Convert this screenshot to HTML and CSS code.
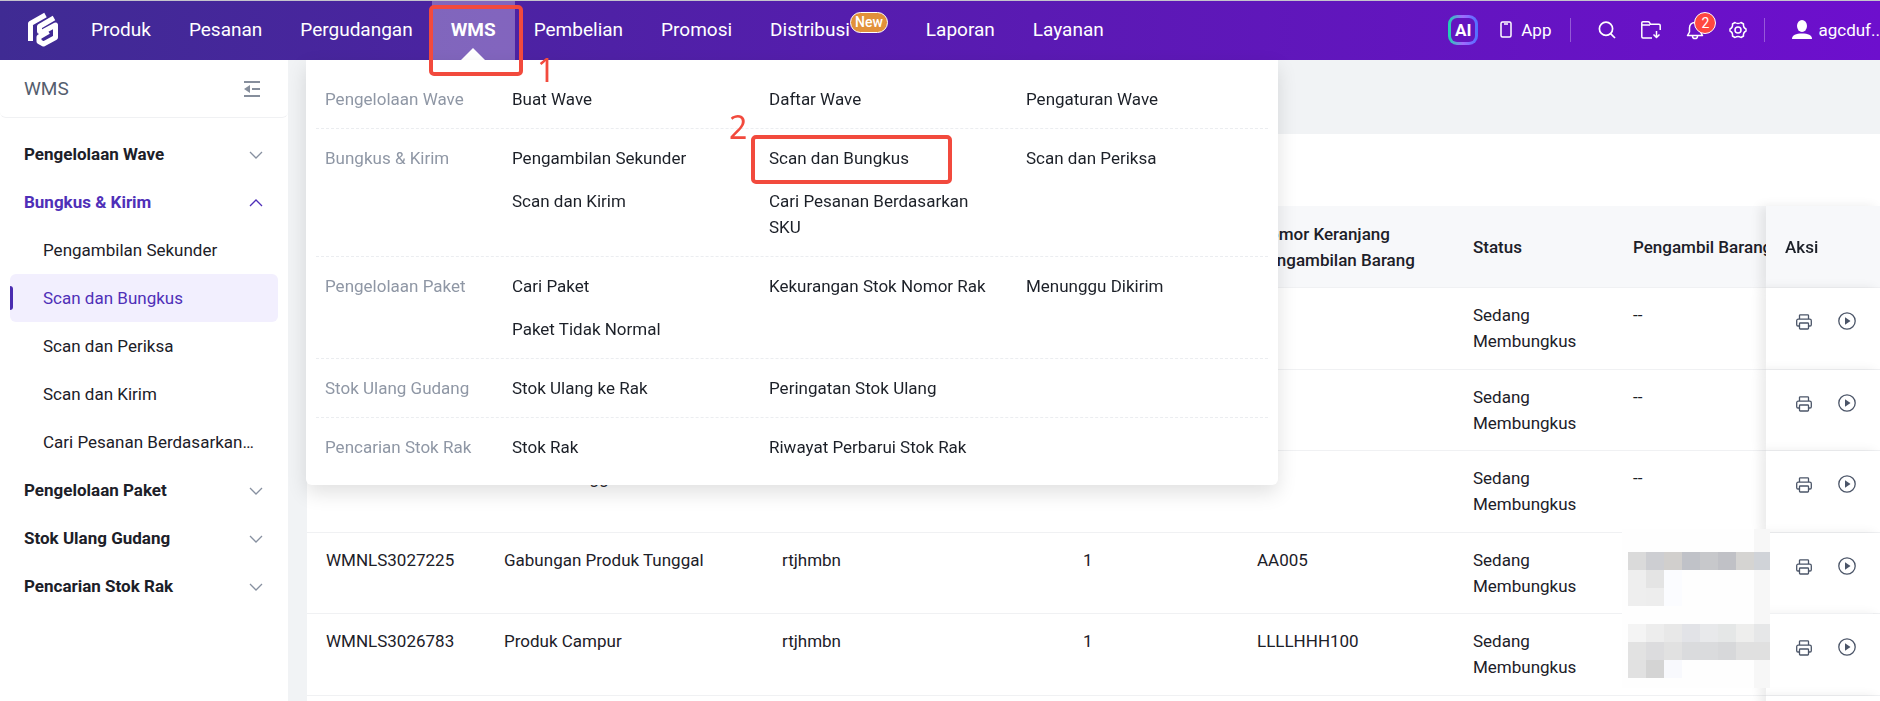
FILE: index.html
```
<!DOCTYPE html>
<html lang="id">
<head>
  <meta charset="utf-8">
  <title>WMS - Scan dan Bungkus</title>
  <link rel="stylesheet" href="styles.css">
</head>
<body>
  <svg class="sprite" aria-hidden="true">
    <symbol id="chevron" viewBox="0 0 14 8">
      <path d="M1 1l6 6 6-6" fill="none" stroke="currentColor" stroke-width="1.3"/>
    </symbol>
    <symbol id="print" viewBox="0 0 16 16">
      <g fill="none" stroke="currentColor" stroke-width="1.3">
        <path d="M3.5 5V1.600a.8.8 0 0 1 .8-.8h7.400a.8.8 0 0 1 .8.8V5"/>
        <path d="M3.500 12H2a1.300 1.300 0 0 1-1.300-1.300V6.800C.7 5.900 1.300 5.200 2.200 5.200h11.600c.9 0 1.500.7 1.500 1.600v3.900A1.300 1.300 0 0 1 14 12h-1.500"/>
        <rect x="3.500" y="9" width="9" height="6" rx=".8"/>
      </g>
    </symbol>
    <symbol id="play" viewBox="0 0 18 18">
      <circle cx="9" cy="9" r="8.200" fill="none" stroke="currentColor" stroke-width="1.300"/>
      <path d="M7 5.300l5.500 3.700-5.500 3.700z" fill="currentColor"/>
    </symbol>
  </svg>

  <header class="topbar">
    <a class="logo" href="#" aria-label="Beranda">
      <svg width="32" height="35" viewBox="0 0 32 35" fill="none" stroke="#fff" stroke-width="5" stroke-linejoin="round">
        <path d="M3.500 29V11.500L18.500 3"/>
        <path d="M27 6L12.500 14.500v5l3 .5L28.500 13v12.500L16.500 32l-4.500-2.500V25l9.500-5.500"/>
      </svg>
    </a>
    <nav class="nav">
      <a href="#">Produk</a>
      <a href="#">Pesanan</a>
      <a href="#">Pergudangan</a>
      <a class="active" href="#">WMS</a>
      <a href="#">Pembelian</a>
      <a href="#">Promosi</a>
      <a class="has-tag" href="#">Distribusi<span class="tag-new">New</span></a>
      <a href="#">Laporan</a>
      <a href="#">Layanan</a>
    </nav>
    <div class="tools">
      <button class="ai" type="button">AI</button>
      <a class="app" href="#">
        <svg width="12" height="17" viewBox="0 0 12 17" fill="none" stroke="#fff" stroke-width="1.500">
          <rect x="1" y="1" width="10" height="15" rx="1.500"/><path d="M4 3h4"/>
        </svg>
        App
      </a>
      <span class="line"></span>
      <div class="icons">
        <button type="button" aria-label="Cari">
          <svg width="18" height="18" viewBox="0 0 18 18" fill="none" stroke="#fff" stroke-width="1.700">
            <circle cx="8" cy="7.800" r="6.600"/><path d="M12.600 12.600l4.400 4.400"/>
          </svg>
        </button>
        <button type="button" aria-label="Unduhan">
          <svg width="20" height="18" viewBox="0 0 20 18" fill="none" stroke="#fff" stroke-width="1.500" stroke-linejoin="round">
            <path d="M11 17H2a1.200 1.200 0 0 1-1.200-1.200V1.800c0-.6.400-1 1-1h5.400c.6 0 1 .2 1.300.7l1 1.800h8.500c.7 0 1.200.5 1.200 1.200V9"/>
            <path d="M1 4h8M15.500 10v6.500M12.500 13.500l3 3 3-3"/>
          </svg>
        </button>
        <button class="bell" type="button" aria-label="Notifikasi">
          <svg width="18" height="20" viewBox="0 0 18 20" fill="none" stroke="#fff" stroke-width="1.500" stroke-linejoin="round">
            <path d="M9 2.500c-3.500 0-5.500 2.500-5.500 5.500v4L1.500 15.500h15l-2-3.500V8c0-3-2-5.500-5.500-5.500z"/>
            <path d="M6.500 16c0 1.600 1 2.600 2.500 2.600s2.500-1 2.500-2.600"/>
          </svg>
          <span class="count">2</span>
        </button>
        <button type="button" aria-label="Pengaturan">
          <svg width="18" height="18" viewBox="0 0 18 18" fill="none" stroke="#fff" stroke-width="1.500" stroke-linejoin="round">
            <path d="M6 1.500Q9 3.500 12 1.500L14.500 3Q14 6.500 17 8v2Q14 11.500 14.500 15L12 16.500Q9 14.500 6 16.500L3.500 15Q4 11.500 1 10V8Q4 6.500 3.500 3z"/>
            <circle cx="9" cy="9" r="3"/>
          </svg>
        </button>
      </div>
      <span class="line"></span>
      <a class="user" href="#">
        <svg width="20" height="20" viewBox="0 0 20 20" fill="#fff">
          <ellipse cx="10" cy="6" rx="5" ry="6"/><path d="M0 19c0-4 4-5.500 10-5.500S20 15 20 19z"/>
        </svg>
        <span>agcduf..</span>
      </a>
    </div>
  </header>

  <div class="mega">
    <div class="mega-row">
      <span class="mega-label">Pengelolaan Wave</span>
      <a href="#">Buat Wave</a>
      <a href="#">Daftar Wave</a>
      <a href="#">Pengaturan Wave</a>
    </div>
    <div class="mega-row">
      <span class="mega-label">Bungkus &amp; Kirim</span>
      <a href="#">Pengambilan Sekunder</a>
      <a href="#">Scan dan Bungkus</a>
      <a href="#">Scan dan Periksa</a>
      <a class="first" href="#">Scan dan Kirim</a>
      <a href="#">Cari Pesanan Berdasarkan SKU</a>
    </div>
    <div class="mega-row">
      <span class="mega-label">Pengelolaan Paket</span>
      <a href="#">Cari Paket</a>
      <a href="#">Kekurangan Stok Nomor Rak</a>
      <a href="#">Menunggu Dikirim</a>
      <a class="first" href="#">Paket Tidak Normal</a>
    </div>
    <div class="mega-row">
      <span class="mega-label">Stok Ulang Gudang</span>
      <a href="#">Stok Ulang ke Rak</a>
      <a href="#">Peringatan Stok Ulang</a>
    </div>
    <div class="mega-row">
      <span class="mega-label">Pencarian Stok Rak</span>
      <a href="#">Stok Rak</a>
      <a href="#">Riwayat Perbarui Stok Rak</a>
    </div>
  </div>

  <!-- langkah panduan -->
  <div class="mark mark-wms"></div>
  <span class="step step-one">1</span>
  <div class="mark mark-scan"></div>
  <span class="step step-two">2</span>

  <div class="layout">
    <aside class="sidebar">
      <div class="sidebar-head">
        <span>WMS</span>
        <button type="button" aria-label="Ciutkan menu">
          <svg width="18" height="16" viewBox="0 0 18 16" fill="none" stroke="#868e9c" stroke-width="2">
            <path d="M1 1h16M9 8h8M1 15h16"/><path d="M7 4v8L1 8z" fill="#868e9c" stroke="none"/>
          </svg>
        </button>
      </div>
      <nav class="side-nav">
        <button class="group" type="button">Pengelolaan Wave<svg><use href="#chevron"/></svg></button>
        <button class="group open" type="button">Bungkus &amp; Kirim<svg><use href="#chevron"/></svg></button>
        <a href="#">Pengambilan Sekunder</a>
        <a class="active" href="#">Scan dan Bungkus</a>
        <a href="#">Scan dan Periksa</a>
        <a href="#">Scan dan Kirim</a>
        <a href="#">Cari Pesanan Berdasarkan SKU</a>
        <button class="group" type="button">Pengelolaan Paket<svg><use href="#chevron"/></svg></button>
        <button class="group" type="button">Stok Ulang Gudang<svg><use href="#chevron"/></svg></button>
        <button class="group" type="button">Pencarian Stok Rak<svg><use href="#chevron"/></svg></button>
      </nav>
    </aside>

    <main class="content">
      <div class="card">
        <table class="waves">
          <colgroup>
            <col class="c-wave"><col class="c-type"><col class="c-area"><col class="c-qty"><col class="c-basket"><col class="c-status"><col class="c-picker"><col class="c-action">
          </colgroup>
          <thead>
            <tr>
              <th></th>
              <th></th>
              <th></th>
              <th></th>
              <th>Nomor Keranjang Pengambilan Barang</th>
              <th>Status</th>
              <th>Pengambil Barang</th>
              <th class="action">Aksi</th>
            </tr>
          </thead>
          <tbody>
            <tr>
              <td></td><td></td><td></td><td></td><td></td>
              <td>Sedang Membungkus</td>
              <td>--</td>
              <td class="action"><button type="button" aria-label="Cetak"><svg class="i-print"><use href="#print"/></svg></button><button type="button" aria-label="Mulai"><svg class="i-play"><use href="#play"/></svg></button></td>
            </tr>
            <tr>
              <td></td><td></td><td></td><td></td><td></td>
              <td>Sedang Membungkus</td>
              <td>--</td>
              <td class="action"><button type="button" aria-label="Cetak"><svg class="i-print"><use href="#print"/></svg></button><button type="button" aria-label="Mulai"><svg class="i-play"><use href="#play"/></svg></button></td>
            </tr>
            <tr>
              <td></td><td>Produk Tunggal</td><td></td><td></td><td></td>
              <td>Sedang Membungkus</td>
              <td>--</td>
              <td class="action"><button type="button" aria-label="Cetak"><svg class="i-print"><use href="#print"/></svg></button><button type="button" aria-label="Mulai"><svg class="i-play"><use href="#play"/></svg></button></td>
            </tr>
            <tr>
              <td>WMNLS3027225</td><td>Gabungan Produk Tunggal</td><td>rtjhmbn</td><td>1</td><td>AA005</td>
              <td>Sedang Membungkus</td>
              <td class="masked">
                <svg class="mosaic" viewBox="0 0 148 159" shape-rendering="crispEdges">
                  <path fill="#fefefe" d="M0 0h148v159H0z"/>
                  <path fill="#f7f7f7" d="M132 0h16v159h-16z"/>
                  <g transform="translate(6 23)">
                    <path fill="#dadada" d="M0 0h18v18H0z"/><path fill="#cdced2" d="M18 0h18v18H18z"/><path fill="#d1cfcd" d="M36 0h18v18H36z"/><path fill="#c0c2c8" d="M54 0h18v18H54z"/><path fill="#c7c8cb" d="M72 0h18v18H72z"/><path fill="#c0c1c6" d="M90 0h18v18H90z"/><path fill="#d5d4d2" d="M108 0h18v18h-18z"/><path fill="#d0d3d8" d="M126 0h16v18h-16z"/>
                    <path fill="#eee" d="M0 18h18v36H0z"/><path fill="#e4e4e4" d="M18 18h18v18H18z"/><path fill="#ededed" d="M18 36h18v18H18z"/><path fill="#fbfcff" d="M36 18h18v36H36z"/>
                  </g>
                  <g transform="translate(6 95)">
                    <path fill="#f4f4f4" d="M0 0h18v18H0z"/><path fill="#ededed" d="M18 0h18v18H18z"/><path fill="#e8e8e8" d="M36 0h18v18H36z"/><path fill="#e2e3e7" d="M54 0h18v18H54z"/><path fill="#e8e9eb" d="M72 0h18v18H72z"/><path fill="#e5e7e7" d="M90 0h18v18H90z"/><path fill="#eeeeed" d="M108 0h18v18h-18z"/><path fill="#e6e7e8" d="M126 0h16v18h-16z"/>
                    <path fill="#e2e2e2" d="M0 18h18v18H0z"/><path fill="#dcdcde" d="M18 18h18v18H18z"/><path fill="#e1e1e1" d="M36 18h18v18H36z"/><path fill="#dadbdd" d="M54 18h36v18H54z"/><path fill="#d7d8da" d="M90 18h18v18H90z"/><path fill="#e0e0e0" d="M108 18h34v18h-34z"/>
                    <path fill="#e1e1e1" d="M0 36h18v18H0z"/><path fill="#d4d4d4" d="M18 36h18v18H18z"/><path fill="#f8f9fd" d="M36 36h18v18H36z"/>
                  </g>
                </svg>
              </td>
              <td class="action"><button type="button" aria-label="Cetak"><svg class="i-print"><use href="#print"/></svg></button><button type="button" aria-label="Mulai"><svg class="i-play"><use href="#play"/></svg></button></td>
            </tr>
            <tr>
              <td>WMNLS3026783</td><td>Produk Campur</td><td>rtjhmbn</td><td>1</td><td>LLLLHHH100</td>
              <td>Sedang Membungkus</td>
              <td></td>
              <td class="action"><button type="button" aria-label="Cetak"><svg class="i-print"><use href="#print"/></svg></button><button type="button" aria-label="Mulai"><svg class="i-play"><use href="#play"/></svg></button></td>
            </tr>
            <tr>
              <td></td><td></td><td></td><td></td><td></td><td></td><td></td><td class="action"></td>
            </tr>
          </tbody>
        </table>
      </div>
    </main>
  </div>
</body>
</html>
```
FILE: styles.css
```
* {
  box-sizing: border-box;
}

body {
  margin: 0;
  height: 100vh;
  display: flex;
  flex-direction: column;
  position: relative;
  overflow: hidden;
  font-family: Roboto, "Liberation Sans", sans-serif;
  font-size: 17px;
  line-height: 26px;
  color: #1c2028;
  background-color: #f1f3f5;
}

a {
  color: inherit;
  text-decoration: none;
}

button {
  font: inherit;
  color: inherit;
  padding: 0;
  border: none;
  background: none;
  cursor: pointer;
}

svg {
  display: block;
}

.sprite {
  position: absolute;
  width: 0;
  height: 0;
}

/* top bar */
.topbar {
  flex: none;
  display: flex;
  height: 60px;
  border-top: 1px solid #c4c4cc;
  background: linear-gradient(90deg, #3f2b93, #5a1ab3 55%, #6d0fcd);
  color: #fff;
  font-size: 19px;
}

.logo {
  flex: none;
  display: flex;
  align-items: center;
  padding: 0 13px 2px 27px;
}

.nav {
  display: flex;
}

.nav a {
  position: relative;
  display: flex;
  align-items: center;
  padding: 0 19px 2px;
}

.nav .active {
  font-weight: 700;
  background-color: rgba(255, 255, 255, 0.3);
}

.nav .active::after {
  content: "";
  position: absolute;
  left: 50%;
  bottom: 0;
  margin-left: -12px;
  border: 12px solid transparent;
  border-top-width: 0;
  border-bottom-color: #fff;
}

.nav .has-tag {
  padding-right: 57px;
}

.tag-new {
  position: absolute;
  top: 11px;
  right: 19px;
  height: 21px;
  padding: 0 4px;
  border: 1px solid #fff;
  border-radius: 11px;
  background-color: #e2913a;
  font-size: 14px;
  line-height: 19px;
  font-weight: 500;
}

.tools {
  flex: none;
  display: flex;
  align-items: center;
  margin-left: auto;
  padding-bottom: 2px;
  font-size: 17px;
}

.ai {
  width: 30px;
  height: 30px;
  border: 3px solid transparent;
  border-radius: 9px;
  background: linear-gradient(#6315bf, #6315bf) padding-box, linear-gradient(90deg, #18d5b0, #a269ff 50%, #4e70ff) border-box;
  font-weight: 700;
  line-height: 24px;
}

.app {
  display: flex;
  align-items: center;
  gap: 9px;
  margin: 0 19px 0 22px;
}

.line {
  width: 1px;
  height: 24px;
  background-color: rgba(255, 255, 255, 0.3);
}

.icons {
  display: flex;
  align-items: center;
  gap: 25px;
  padding: 0 17px 0 27px;
}

.bell {
  position: relative;
}

.count {
  position: absolute;
  top: -8px;
  left: 8px;
  width: 22px;
  height: 22px;
  border: 1px solid #fff;
  border-radius: 50%;
  background-color: #ff4740;
  font-size: 14px;
  line-height: 20px;
}

.user {
  display: flex;
  align-items: center;
  gap: 6px;
  padding-left: 27px;
}

/* WMS drop-down */
.mega {
  position: absolute;
  z-index: 5;
  top: 60px;
  left: 306px;
  width: 972px;
  padding: 10px 10px 9px;
  border-radius: 0 0 6px 6px;
  background-color: #fff;
  box-shadow: 0 8px 20px rgba(0, 0, 0, 0.12);
}

.mega-row {
  display: grid;
  grid-template-columns: 187px 257px 257px 1fr;
  row-gap: 17px;
  padding: 16px 0 16px 9px;
}

.mega-row + .mega-row {
  border-top: 1px dashed #ebedf0;
}

.mega-row a {
  padding-right: 38px;
}

.mega-row .first {
  grid-column: 2;
}

.mega-label {
  color: #8f97a5;
}

/* guide marks */
.mark {
  position: absolute;
  z-index: 6;
  border: 4px solid #f24a3d;
  border-radius: 5px;
}

.mark-wms {
  top: 5px;
  left: 429px;
  width: 94px;
  height: 71px;
}

.mark-scan {
  top: 135px;
  left: 751px;
  width: 201px;
  height: 49px;
}

.step {
  position: absolute;
  z-index: 6;
  font-family: "Noto Sans", sans-serif;
  font-size: 32px;
  line-height: 40px;
  color: #f24a3d;
}

.step-one {
  top: 50px;
  left: 537px;
}

.step-two {
  top: 107px;
  left: 729px;
}

/* sidebar */
.layout {
  flex: 1;
  display: flex;
  min-height: 0;
}

.sidebar {
  flex: none;
  width: 288px;
  background-color: #fff;
}

.sidebar-head {
  display: flex;
  justify-content: space-between;
  align-items: center;
  height: 58px;
  padding: 0 27px 0 24px;
  border-bottom: 1px solid #f0f1f3;
  border-radius: 0 0 6px 6px;
  font-size: 19px;
  color: #555e6e;
}

.side-nav {
  padding: 12px 10px;
}

.side-nav a,
.group {
  display: block;
  width: 100%;
  height: 48px;
  line-height: 48px;
}

.side-nav a {
  position: relative;
  padding: 0 24px 0 33px;
  border-radius: 6px;
  overflow: hidden;
  text-overflow: ellipsis;
  white-space: nowrap;
}

.side-nav .active {
  color: #4f2fb8;
  background-color: #f2effe;
}

.side-nav .active::before {
  content: "";
  position: absolute;
  top: 12px;
  left: 0;
  width: 3px;
  height: 24px;
  border-radius: 0 3px 3px 0;
  background-color: #4a2cb0;
}

.side-nav .group {
  display: flex;
  justify-content: space-between;
  align-items: center;
  padding: 0 15px 0 14px;
  font-weight: 700;
}

.group svg {
  width: 14px;
  height: 8px;
  margin-top: 2px;
  color: #8790a0;
}

.side-nav .open {
  color: #4f2fb8;
}

.open svg {
  color: #4f2fb8;
  transform: rotate(180deg);
}

/* table */
.content {
  flex: 1;
  min-width: 0;
  display: flex;
  padding: 74px 0 0 19px;
}

.card {
  flex: 1;
  min-width: 0;
  padding-top: 72px;
  overflow: hidden;
  background-color: #fff;
}

.waves {
  width: 100%;
  min-width: 1680px;
  table-layout: fixed;
  border-collapse: separate;
  border-spacing: 0;
}

.c-wave { width: 178px; }
.c-type { width: 278px; }
.c-area { width: 301px; }
.c-qty { width: 174px; }
.c-basket { width: 216px; }
.c-status { width: 160px; }
.c-action { width: 114px; }

.waves th,
.waves td {
  padding: 14px 19px;
  border-bottom: 1px solid #f0f1f3;
  text-align: left;
  vertical-align: top;
}

.waves th {
  height: 82px;
  background-color: #f7f8fa;
  font-weight: 500;
  vertical-align: middle;
}

.waves td {
  height: 82px;
}

.waves tbody tr:nth-child(even) td {
  height: 81px;
}

.waves .action {
  position: sticky;
  right: 0;
  background-color: #fff;
  box-shadow: -6px 0 10px rgba(0, 0, 0, 0.08);
}

.waves th.action {
  background-color: #f7f8fa;
}

.waves td.action {
  padding-top: 23px;
  white-space: nowrap;
}

.action button {
  display: inline-block;
  width: 18px;
  margin: 0 12px;
}

.action button:first-child {
  margin-left: 10px;
  margin-right: 13px;
}

.action svg {
  margin: 0 auto;
  color: #4b5568;
}

.i-print {
  width: 16px;
  height: 16px;
}

.i-play {
  width: 18px;
  height: 18px;
}

.waves .masked {
  position: relative;
  z-index: 1;
}

/* covers the names of two rows */
.mosaic {
  position: absolute;
  top: -4px;
  left: 8px;
  width: 148px;
  height: 159px;
}
```
